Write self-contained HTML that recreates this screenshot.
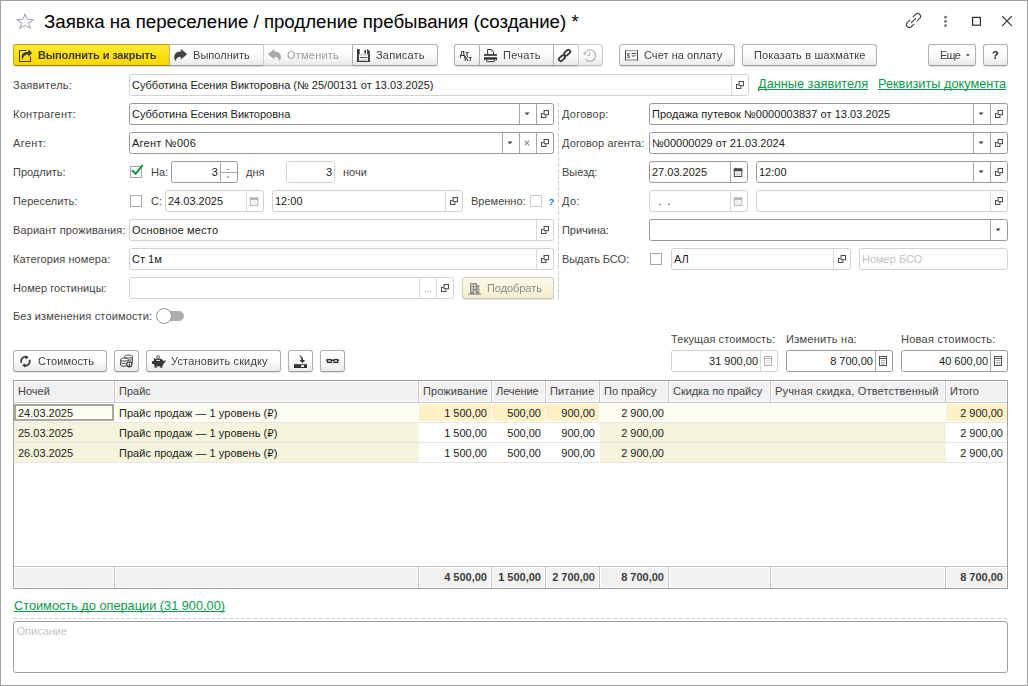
<!DOCTYPE html>
<html lang="ru"><head><meta charset="utf-8"><title>Заявка на переселение / продление пребывания (создание) *</title>
<style>
*{box-sizing:border-box;margin:0;padding:0}
html,body{width:1028px;height:686px;overflow:hidden;background:#fff}
body{font-family:"Liberation Sans",Arial,sans-serif;font-size:11px;color:#333;position:relative}
.a{position:absolute;white-space:nowrap}
.frame{left:0;top:0;width:1028px;height:686px;border:1px solid #a0a0a0}
.title{left:44px;top:11px;font-size:18.67px;line-height:22px;color:#000}
.btn{height:22px;top:44px;border:1px solid #b0b0b0;border-bottom-color:#9c9c9c;border-radius:3px;background:linear-gradient(#ffffff 35%,#ebebeb);line-height:20px;font-size:11px;color:#414141;box-shadow:0 1px 1px rgba(0,0,0,.13)}
.btn.dis{color:#9c9ca2;border-color:#cdcdcd;border-bottom-color:#c0c0c0;box-shadow:0 1px 1px rgba(0,0,0,.07)}
.btn.y{background:linear-gradient(#ffeb3c,#ffe10a 50%,#f7d700);border-color:#b8a000;border-left-color:#c8aa00;border-bottom-color:#a08800;font-weight:bold;color:#3a3a44}
.btn.cr{background:linear-gradient(#fdfbea,#f2eecb);border-color:#d3d1c4;border-bottom-color:#c9c7ba;color:#8c8c8c;box-shadow:0 1px 1px rgba(0,0,0,.12)}
.bl{border-top-left-radius:0;border-bottom-left-radius:0}
.br{border-top-right-radius:0;border-bottom-right-radius:0;border-right:none}
.t{position:absolute;top:0;line-height:20px;will-change:transform}
.lbl{line-height:14px;font-size:11px;color:#444}
.fld{height:22px;border:1px solid #999;border-radius:2.5px;background:#fff;line-height:20px;padding-left:2px;font-size:11px;color:#222;overflow:hidden}
.fld.ro{border-color:#d2d2d2}
.fld.r{text-align:right}
.sep{position:absolute;top:0;bottom:0;width:1px;background:#a8a8a8}
.ro .sep{background:#dadada}
.link{color:#0a9a4a;text-decoration:underline;text-decoration-skip-ink:none;font-size:12.75px;line-height:16px}
.cb{width:12px;height:12px;border:1px solid #a6a6a6;background:#fff}
svg{position:absolute;overflow:visible}
.th{height:20px;line-height:21px;padding-left:4px;color:#444;overflow:hidden}
.vs{width:2px;background:linear-gradient(90deg,#c9c9c9 50%,#fff 50%)}
.td{height:19px;line-height:21px;padding-left:4px;color:#222;overflow:hidden}
.td.num{text-align:right;padding-right:4px;padding-left:0}
</style></head><body>
<div class="a frame"></div>
<div class="a title">Заявка на переселение / продление пребывания (создание) *</div>
<div class="a btn y br" style="left:13px;width:156px"><span class="t" style="left:24px;letter-spacing:-0.138px">Выполнить и закрыть</span></div>
<div class="a btn bl br" style="left:169px;width:94px"><span class="t" style="left:23px;letter-spacing:0.041px">Выполнить</span></div>
<div class="a btn bl br dis" style="left:263px;width:89px"><span class="t" style="left:23px;letter-spacing:0.216px">Отменить</span></div>
<div class="a btn bl" style="left:352px;width:86px"><span class="t" style="left:23px;letter-spacing:0.223px">Записать</span></div>
<div class="a btn br" style="left:454px;width:25px"></div>
<div class="a btn bl br" style="left:479px;width:74px"><span class="t" style="left:23px;letter-spacing:0.28px">Печать</span></div>
<div class="a btn bl br" style="left:553px;width:25px"></div>
<div class="a btn bl dis" style="left:578px;width:25px"></div>
<div class="a btn " style="left:619px;width:116px"><span class="t" style="left:24px;letter-spacing:0.046px">Счет на оплату</span></div>
<div class="a btn " style="left:742px;width:135px"><span class="t" style="left:11px;letter-spacing:0.153px">Показать в шахматке</span></div>
<div class="a btn " style="left:928px;width:48px"><span class="t" style="left:11px;letter-spacing:-0.757px">Еще</span></div>
<div class="a btn " style="left:983px;width:25px;font-weight:bold;color:#222"><span class="t" style="left:8px">?</span></div>
<!-- ICONS: title bar -->
<svg class="a" style="left:15px;top:12px" width="20" height="20" viewBox="15 12 20 20"><polygon points="25.05,14.20 27.22,19.34 33.32,19.61 28.57,23.06 30.16,28.36 25.05,25.36 19.94,28.36 21.53,23.06 16.78,19.61 22.88,19.34" fill="none" stroke="#a3abb3" stroke-width="1.1" stroke-linejoin="miter"/></svg>
<svg class="a" style="left:904px;top:11px" width="20" height="20" viewBox="904 11 20 20"><g fill="none" stroke="#444" stroke-width="1.15" stroke-linecap="round"><path d="M913.1 16.8L915.65 14.25A2.9 2.9 0 0 1 919.75 18.35L917.2 20.9"/><path d="M909.8 20.1L907.25 22.65A2.9 2.9 0 0 0 911.35 26.75L913.9 24.2"/><path d="M911.4 22.6L915.7 18.3"/></g></svg>
<svg class="a" style="left:940px;top:12px" width="12" height="18" viewBox="940 12 12 18"><g fill="#707070"><circle cx="945.5" cy="17.2" r="1.35"/><circle cx="945.5" cy="21.4" r="1.35"/><circle cx="945.5" cy="25.6" r="1.35"/></g></svg>
<svg class="a" style="left:968px;top:12px" width="18" height="18" viewBox="968 12 18 18"><rect x="972.6" y="17.4" width="7.8" height="7.8" fill="none" stroke="#2a2a2a" stroke-width="1.2"/></svg>
<svg class="a" style="left:998px;top:12px" width="18" height="18" viewBox="998 12 18 18"><path d="M1002.2 16.2l9.6 9.6M1011.8 16.2l-9.6 9.6" fill="none" stroke="#2a2a2a" stroke-width="1.1"/></svg>

<!-- ICONS: main toolbar -->
<svg class="a" style="left:17px;top:46px" width="18" height="18" viewBox="17 46 18 18"><path d="M26.5 50.5H19.5V61.5H30.5V56.5" fill="none" stroke="#3e3e4a" stroke-width="1.05"/><path d="M28.4 49L32 53L28.4 56.9V54.5C25.4 54.5 23.6 55.6 22.4 59.8C20.8 55.5 21.8 51.8 28.4 51.8Z" fill="#3e3e4a"/></svg>
<svg class="a" style="left:172px;top:47px" width="18" height="16" viewBox="172 47 18 16"><path d="M180.8 48.8L187.2 54.2L180.8 59.6V56.8C178 56.8 176.4 58 175.6 61.2C173.2 58 173.4 51.6 180.8 51.6Z" fill="#444"/></svg>
<svg class="a" style="left:266px;top:47px" width="18" height="16" viewBox="266 47 18 16"><path d="M274.4 48.8L268 54.2L274.4 59.6V56.8C277.2 56.8 278.8 58 279.6 61.2C282 58 281.8 51.6 274.4 51.6Z" fill="#a8a8a8"/></svg>
<svg class="a" style="left:356px;top:48px" width="15" height="15" viewBox="356 48 15 15"><path d="M357 49H359.7V54.3H367.1V49H367.5L369.9 51.4V61.9H357Z" fill="#3a3a3a"/><rect x="364.4" y="50" width="1.6" height="3.6" fill="#3a3a3a"/><rect x="358.9" y="54.3" width="9.1" height="6.6" fill="#fff"/><rect x="358.9" y="54.3" width="9.1" height="1.4" fill="#cfcfcf"/><rect x="359.8" y="57.1" width="7.4" height=".9" fill="#3a3a3a"/><rect x="359.6" y="59.3" width="7.8" height="1.5" fill="#c4c4c4"/></svg>
<svg class="a" style="left:458px;top:48px;will-change:transform" width="16" height="15" viewBox="458 48 16 15"><g font-family="Liberation Sans,Arial,sans-serif" font-weight="bold" font-size="7.4px" fill="#333"><text x="459.8" y="55.5" textLength="9" lengthAdjust="spacingAndGlyphs">Дт</text><text x="464.2" y="61.2" textLength="8" lengthAdjust="spacingAndGlyphs">Кт</text></g></svg>
<svg class="a" style="left:483px;top:48px" width="16" height="15" viewBox="483 48 16 15"><path d="M487.6 54.5V49.5H491.4L493.5 51.6V54.5" fill="#fff" stroke="#3a3a3a" stroke-width="1"/><path d="M491.2 49.6V51.8H493.4" fill="none" stroke="#9a9a9a" stroke-width=".8"/><rect x="484" y="54.1" width="13" height="1.7" fill="#333"/><path d="M484 57.2H497V60.2H495.5V59H485.5V60.2H484Z" fill="#333"/><path d="M486.2 59.2H494.8L494 61.6H487Z" fill="#fff" stroke="#333" stroke-width="1"/></svg>
<svg class="a" style="left:556px;top:47px" width="18" height="17" viewBox="556 47 18 17"><g fill="none" stroke="#3a3a3a" stroke-width="1.8"><rect x="-1.85" y="-3.45" width="3.7" height="6.9" rx="1.85" transform="translate(567.2 52.7) rotate(48)"/><rect x="-1.85" y="-3.45" width="3.7" height="6.9" rx="1.85" transform="translate(561.9 58.2) rotate(48)"/></g></svg>
<svg class="a" style="left:581px;top:47px" width="18" height="17" viewBox="581 47 18 17"><g fill="none" stroke="#b4b4b4" stroke-width="1.15"><path d="M584.6 53.6A5.7 5.7 0 1 1 585.6 59.4"/><path d="M589.6 52V55.4H587.4"/></g><path d="M583 52.6L586.4 53L584.2 55.6Z" fill="#b4b4b4"/></svg>
<svg class="a" style="left:624px;top:49px;will-change:transform" width="15" height="13" viewBox="624 49 15 13"><rect x="625" y="50" width="13" height="10.6" fill="#fff"/><path d="M625 50.7H638M625 60H638" stroke="#a4a4a4" stroke-width="1.3" fill="none"/><path d="M625.5 50.4V60.4M637.5 50.4V60.4" stroke="#444" stroke-width="1" fill="none"/><text x="626.4" y="58.4" font-family="Liberation Sans,Arial,sans-serif" font-size="8px" fill="#333" textLength="3.7" lengthAdjust="spacingAndGlyphs">$</text><path d="M631.6 53.5H636" stroke="#444" stroke-width="1" fill="none"/><path d="M631.6 55.5H636M632 56.6H634.6" stroke="#8a8a8a" stroke-width=".9" fill="none"/></svg>
<svg class="a" style="left:964px;top:52px" width="8" height="6" viewBox="964 52 8 6"><path d="M965.9 54.3H969.9L967.9 56.4Z" fill="#444"/></svg>

<div class="a lbl" style="left:13px;top:78px;letter-spacing:0.255px">Заявитель:</div>
<div class="a fld ro" style="left:129px;top:74px;width:620px">Субботина Есения Викторовна (№ 25/00131 от 13.03.2025)<i class="sep" style="left:601px"></i></div>
<svg class="a" style="left:735px;top:80px" width="12" height="12" viewBox="735 80 12 12"><g fill="none" stroke="#4a4a4a" stroke-width="1.05"><path d="M738.4 84.4H736.5V88.4H740.9V86.3"/><rect x="739.1" y="81.5" width="4.4" height="4.2" fill="#fff"/></g></svg>
<div class="a link" style="left:758px;top:76px">Данные заявителя</div>
<div class="a link" style="left:878px;top:76px">Реквизиты документа</div>
<div class="a lbl" style="left:13px;top:107px;letter-spacing:0.273px">Контрагент:</div>
<div class="a fld " style="left:129px;top:103px;width:425px">Субботина Есения Викторовна<i class="sep" style="left:389px"></i><i class="sep" style="left:406px"></i></div>
<svg class="a" style="left:523px;top:111px" width="9" height="6" viewBox="523 111 9 6"><path d="M524.6 112.6H529.6L527.1 115.3Z" fill="#444"/></svg>
<svg class="a" style="left:540px;top:109px" width="12" height="12" viewBox="540 109 12 12"><g fill="none" stroke="#4a4a4a" stroke-width="1.05"><path d="M543.4 113.4H541.5V117.4H545.9V115.3"/><rect x="544.1" y="110.5" width="4.4" height="4.2" fill="#fff"/></g></svg>
<div class="a lbl" style="left:562px;top:107px;letter-spacing:0.25px">Договор:</div>
<div class="a fld " style="left:649px;top:103px;width:359px;letter-spacing:0.048px">Продажа путевок №0000003837 от 13.03.2025<i class="sep" style="left:323px"></i><i class="sep" style="left:340px"></i></div>
<svg class="a" style="left:977px;top:111px" width="9" height="6" viewBox="977 111 9 6"><path d="M978.6 112.6H983.6L981.1 115.3Z" fill="#444"/></svg>
<svg class="a" style="left:994px;top:109px" width="12" height="12" viewBox="994 109 12 12"><g fill="none" stroke="#4a4a4a" stroke-width="1.05"><path d="M997.4 113.4H995.5V117.4H999.9V115.3"/><rect x="998.1" y="110.5" width="4.4" height="4.2" fill="#fff"/></g></svg>
<div class="a lbl" style="left:13px;top:136px;letter-spacing:0.338px">Агент:</div>
<div class="a fld " style="left:129px;top:132px;width:425px;letter-spacing:0.246px">Агент №006<i class="sep" style="left:372px"></i><i class="sep" style="left:389px"></i><i class="sep" style="left:406px"></i></div>
<svg class="a" style="left:506px;top:140px" width="9" height="6" viewBox="506 140 9 6"><path d="M507.6 141.6H512.6L510.1 144.3Z" fill="#444"/></svg>
<svg class="a" style="left:523px;top:139px" width="9" height="9" viewBox="523 139 9 9"><path d="M524.7 140.7L529.3 145.3M529.3 140.7L524.7 145.3" stroke="#8a8a8a" stroke-width="1.1" fill="none"/></svg>
<svg class="a" style="left:540px;top:138px" width="12" height="12" viewBox="540 138 12 12"><g fill="none" stroke="#4a4a4a" stroke-width="1.05"><path d="M543.4 142.4H541.5V146.4H545.9V144.3"/><rect x="544.1" y="139.5" width="4.4" height="4.2" fill="#fff"/></g></svg>
<div class="a lbl" style="left:562px;top:136px;letter-spacing:0.108px">Договор агента:</div>
<div class="a fld " style="left:649px;top:132px;width:359px">№00000029 от 21.03.2024<i class="sep" style="left:323px"></i><i class="sep" style="left:340px"></i></div>
<svg class="a" style="left:977px;top:140px" width="9" height="6" viewBox="977 140 9 6"><path d="M978.6 141.6H983.6L981.1 144.3Z" fill="#444"/></svg>
<svg class="a" style="left:994px;top:138px" width="12" height="12" viewBox="994 138 12 12"><g fill="none" stroke="#4a4a4a" stroke-width="1.05"><path d="M997.4 142.4H995.5V146.4H999.9V144.3"/><rect x="998.1" y="139.5" width="4.4" height="4.2" fill="#fff"/></g></svg>
<div class="a lbl" style="left:13px;top:165px;letter-spacing:-0.019px">Продлить:</div>
<div class="a cb" style="left:130px;top:166px"></div>
<svg class="a" style="left:130px;top:163px" width="14" height="14" viewBox="130 163 14 14"><path d="M132.6 170.8L135.6 173.9L142.2 165.6" fill="none" stroke="#0a9642" stroke-width="2" stroke-linecap="round" stroke-linejoin="round"/></svg>
<div class="a lbl" style="left:151px;top:165px">На:</div>
<div class="a fld r" style="left:171px;top:161px;width:67px;padding-right:19.2px">3<i class="sep" style="left:48px"></i></div>
<svg class="a" style="left:221px;top:162px" width="16" height="20" viewBox="221 162 16 20"><path d="M221 172.5H237" stroke="#a8a8a8" stroke-width="1"/><path d="M226.7 170.1H229.3L228 168.7Z M226.7 176.6H229.3L228 178Z" fill="#666"/></svg>
<div class="a lbl" style="left:246px;top:165px">дня</div>
<div class="a fld ro r" style="left:286px;top:161px;width:49px;padding-right:2px">3</div>
<div class="a lbl" style="left:343px;top:165px">ночи</div>
<div class="a lbl" style="left:562px;top:165px;letter-spacing:0.006px">Выезд:</div>
<div class="a fld " style="left:649px;top:161px;width:99px;padding-left:2px">27.03.2025<i class="sep" style="left:80px"></i></div>
<svg class="a" style="left:733px;top:167px" width="11" height="11" viewBox="733 167 11 11"><rect x="734.3" y="169" width="7.5" height="7.5" fill="#fff" stroke="#4a4a4a" stroke-width="1"/><rect x="733.8" y="168.6" width="8.5" height="2.6" fill="#4a4a4a"/><rect x="735.4" y="167.8" width="1.3" height="1.2" fill="#4a4a4a"/><rect x="739.4" y="167.8" width="1.3" height="1.2" fill="#4a4a4a"/><path d="M735 173H741.2M735 174.8H741.2M737 171.4V176M739.1 171.4V176" stroke="#c8c8c8" stroke-width=".7" fill="none"/></svg>
<div class="a fld " style="left:756px;top:161px;width:252px">12:00<i class="sep" style="left:216px"></i><i class="sep" style="left:233px"></i></div>
<svg class="a" style="left:977px;top:169px" width="9" height="6" viewBox="977 169 9 6"><path d="M978.6 170.6H983.6L981.1 173.3Z" fill="#444"/></svg>
<svg class="a" style="left:994px;top:167px" width="12" height="12" viewBox="994 167 12 12"><g fill="none" stroke="#4a4a4a" stroke-width="1.05"><path d="M997.4 171.4H995.5V175.4H999.9V173.3"/><rect x="998.1" y="168.5" width="4.4" height="4.2" fill="#fff"/></g></svg>
<div class="a lbl" style="left:13px;top:194px;letter-spacing:0.053px">Переселить:</div>
<div class="a cb" style="left:130px;top:195px"></div>
<div class="a lbl" style="left:151px;top:194px">С:</div>
<div class="a fld ro" style="left:165px;top:190px;width:99px;padding-left:2px">24.03.2025<i class="sep" style="left:80px"></i></div>
<svg class="a" style="left:249px;top:196px" width="11" height="11" viewBox="249 196 11 11"><rect x="250.3" y="198" width="7.5" height="7.5" fill="#fff" stroke="#b8b8b8" stroke-width="1"/><rect x="249.8" y="197.6" width="8.5" height="2.6" fill="#b8b8b8"/><rect x="251.4" y="196.8" width="1.3" height="1.2" fill="#b8b8b8"/><rect x="255.4" y="196.8" width="1.3" height="1.2" fill="#b8b8b8"/><path d="M251 202H257.2M251 203.8H257.2M253 200.4V205M255.1 200.4V205" stroke="#e4e4e4" stroke-width=".7" fill="none"/></svg>
<div class="a fld ro" style="left:272px;top:190px;width:191px">12:00<i class="sep" style="left:172px"></i></div>
<svg class="a" style="left:449px;top:196px" width="12" height="12" viewBox="449 196 12 12"><g fill="none" stroke="#4a4a4a" stroke-width="1.05"><path d="M452.4 200.4H450.5V204.4H454.9V202.3"/><rect x="453.1" y="197.5" width="4.4" height="4.2" fill="#fff"/></g></svg>
<div class="a lbl" style="left:471px;top:194px">Временно:</div>
<div class="a cb" style="left:530px;top:195px;border-color:#d0d0d0"></div>
<div class="a lbl" style="left:548.5px;top:194.5px;color:#1a73c8;font-weight:bold;font-size:9.5px">?</div>
<div class="a lbl" style="left:562px;top:194px;letter-spacing:0.431px">До:</div>
<div class="a fld ro" style="left:649px;top:190px;width:99px;padding-left:8.2px">.&nbsp;&nbsp;.<i class="sep" style="left:80px"></i></div>
<svg class="a" style="left:733px;top:196px" width="11" height="11" viewBox="733 196 11 11"><rect x="734.3" y="198" width="7.5" height="7.5" fill="#fff" stroke="#b8b8b8" stroke-width="1"/><rect x="733.8" y="197.6" width="8.5" height="2.6" fill="#b8b8b8"/><rect x="735.4" y="196.8" width="1.3" height="1.2" fill="#b8b8b8"/><rect x="739.4" y="196.8" width="1.3" height="1.2" fill="#b8b8b8"/><path d="M735 202H741.2M735 203.8H741.2M737 200.4V205M739.1 200.4V205" stroke="#e4e4e4" stroke-width=".7" fill="none"/></svg>
<div class="a fld ro" style="left:756px;top:190px;width:252px"><i class="sep" style="left:233px"></i></div>
<svg class="a" style="left:994px;top:196px" width="12" height="12" viewBox="994 196 12 12"><g fill="none" stroke="#4a4a4a" stroke-width="1.05"><path d="M997.4 200.4H995.5V204.4H999.9V202.3"/><rect x="998.1" y="197.5" width="4.4" height="4.2" fill="#fff"/></g></svg>
<div class="a lbl" style="left:13px;top:223px;letter-spacing:0.101px">Вариант проживания:</div>
<div class="a fld ro" style="left:129px;top:219px;width:425px;letter-spacing:0.184px">Основное место<i class="sep" style="left:406px"></i></div>
<svg class="a" style="left:540px;top:225px" width="12" height="12" viewBox="540 225 12 12"><g fill="none" stroke="#4a4a4a" stroke-width="1.05"><path d="M543.4 229.4H541.5V233.4H545.9V231.3"/><rect x="544.1" y="226.5" width="4.4" height="4.2" fill="#fff"/></g></svg>
<div class="a lbl" style="left:562px;top:223px;letter-spacing:-0.057px">Причина:</div>
<div class="a fld " style="left:649px;top:219px;width:359px"><i class="sep" style="left:340px"></i></div>
<svg class="a" style="left:994px;top:227px" width="9" height="6" viewBox="994 227 9 6"><path d="M995.6 228.6H1000.6L998.1 231.3Z" fill="#444"/></svg>
<div class="a lbl" style="left:13px;top:252px;letter-spacing:0.097px">Категория номера:</div>
<div class="a fld ro" style="left:129px;top:248px;width:425px">Ст 1м<i class="sep" style="left:406px"></i></div>
<svg class="a" style="left:540px;top:254px" width="12" height="12" viewBox="540 254 12 12"><g fill="none" stroke="#4a4a4a" stroke-width="1.05"><path d="M543.4 258.4H541.5V262.4H545.9V260.3"/><rect x="544.1" y="255.5" width="4.4" height="4.2" fill="#fff"/></g></svg>
<div class="a lbl" style="left:562px;top:252px;letter-spacing:-0.077px">Выдать БСО:</div>
<div class="a cb" style="left:650px;top:253px"></div>
<div class="a fld ro" style="left:671px;top:248px;width:180px">АЛ<i class="sep" style="left:161px"></i></div>
<svg class="a" style="left:837px;top:254px" width="12" height="12" viewBox="837 254 12 12"><g fill="none" stroke="#4a4a4a" stroke-width="1.05"><path d="M840.4 258.4H838.5V262.4H842.9V260.3"/><rect x="841.1" y="255.5" width="4.4" height="4.2" fill="#fff"/></g></svg>
<div class="a fld ro" style="left:859px;top:248px;width:149px;color:#c4c4c4">Номер БСО</div>
<div class="a lbl" style="left:13px;top:281px;letter-spacing:0.046px">Номер гостиницы:</div>
<div class="a fld ro" style="left:129px;top:277px;width:325px"><i class="sep" style="left:289px"></i><i class="sep" style="left:306px"></i></div>
<svg class="a" style="left:440px;top:283px" width="12" height="12" viewBox="440 283 12 12"><g fill="none" stroke="#4a4a4a" stroke-width="1.05"><path d="M443.4 287.4H441.5V291.4H445.9V289.3"/><rect x="444.1" y="284.5" width="4.4" height="4.2" fill="#fff"/></g></svg>
<div class="a" style="left:423.6px;top:282px;line-height:14px;color:#a8a8a8;font-size:10px;letter-spacing:-.3px;will-change:transform">...</div>
<div class="a btn cr" style="left:462px;width:92px;top:277px"><span class="t" style="left:24px;letter-spacing:-0.065px">Подобрать</span></div>
<svg class="a" style="left:468px;top:282px" width="14" height="14" viewBox="468 282 14 14"><g fill="#8e8e8e"><path d="M470 283H477V294H470Z"/><path d="M477 285.2H479.4V294H477Z"/><rect x="468.2" y="293.6" width="13" height="1.1"/></g><g fill="#fbf8e2"><rect x="471.3" y="284.3" width="1.5" height="1.7"/><rect x="474" y="284.3" width="1.5" height="1.7"/><rect x="471.3" y="287.1" width="1.5" height="1.7"/><rect x="474" y="287.1" width="1.5" height="1.7"/><rect x="471.3" y="289.9" width="1.5" height="1.5"/><rect x="477.6" y="287.1" width="1" height="1.7"/><rect x="477.6" y="289.9" width="1" height="1.5"/><rect x="474.2" y="290.4" width="1.3" height="3.2"/></g></svg>
<div class="a" style="left:558px;top:103px;width:1px;height:196px;background:repeating-linear-gradient(#cdcdcd 0 4px,#fff 4px 6px)"></div>
<div class="a lbl" style="left:13px;top:309px;letter-spacing:0.155px">Без изменения стоимости:</div>
<div class="a" style="left:164px;top:311px;width:20px;height:10px;border-radius:0 5px 5px 0;background:#adadad"></div>
<div class="a" style="left:156px;top:308px;width:16px;height:16px;border-radius:8px;background:#fff;border:1px solid #8f9696"></div>
<div class="a lbl" style="left:671px;top:332px;letter-spacing:0.095px">Текущая стоимость:</div>
<div class="a lbl" style="left:786px;top:332px;letter-spacing:0.271px">Изменить на:</div>
<div class="a lbl" style="left:901px;top:332px;letter-spacing:0.251px">Новая стоимость:</div>
<div class="a fld ro r" style="left:671px;top:350px;width:107px;padding-right:19px">31 900,00<i class="sep" style="left:88px"></i></div>
<svg class="a" style="left:764px;top:356px" width="9" height="11" viewBox="764 356 9 11"><rect x="764.5" y="356.5" width="7" height="9" fill="#fff" stroke="#b4b4b4" stroke-width="1"/><path d="M765 358.5H771" stroke="#b4b4b4" stroke-width="1"/><path d="M766 360.5H770M766 362.5H770M766 364H770" stroke="#dcdcdc" stroke-width="1"/></svg>
<div class="a fld r" style="left:786px;top:350px;width:107px;padding-right:19px">8 700,00<i class="sep" style="left:88px"></i></div>
<svg class="a" style="left:879px;top:356px" width="9" height="11" viewBox="879 356 9 11"><rect x="879.5" y="356.5" width="7" height="9" fill="#fff" stroke="#555" stroke-width="1"/><path d="M880 358.5H886" stroke="#555" stroke-width="1"/><path d="M881 360.5H885M881 362.5H885M881 364H885" stroke="#b0b0b0" stroke-width="1"/></svg>
<div class="a fld r" style="left:901px;top:350px;width:107px;padding-right:19px">40 600,00<i class="sep" style="left:88px"></i></div>
<svg class="a" style="left:994px;top:356px" width="9" height="11" viewBox="994 356 9 11"><rect x="994.5" y="356.5" width="7" height="9" fill="#fff" stroke="#555" stroke-width="1"/><path d="M995 358.5H1001" stroke="#555" stroke-width="1"/><path d="M996 360.5H1000M996 362.5H1000M996 364H1000" stroke="#b0b0b0" stroke-width="1"/></svg>
<div class="a btn " style="left:13px;width:94px;top:350px"><span class="t" style="left:24px;letter-spacing:0.1px">Стоимость</span></div>
<div class="a btn " style="left:114px;width:25px;top:350px"></div>
<div class="a btn " style="left:146px;width:135px;top:350px"><span class="t" style="left:24.400000000000006px;letter-spacing:0.155px">Установить скидку</span></div>
<div class="a btn " style="left:288px;width:25px;top:350px"></div>
<div class="a btn " style="left:320px;width:25px;top:350px"></div>
<!-- ICONS: table toolbar -->
<svg class="a" style="left:19px;top:354px" width="14" height="15" viewBox="19 354 14 15"><g fill="none" stroke="#3a3a3a" stroke-width="1.8"><path d="M21.3 362.8A4.4 4.4 0 0 1 26.4 357"/><path d="M29.6 359.8A4.4 4.4 0 0 1 24.5 365.6"/></g><path d="M25.6 355L28.7 357.5L25.6 359.6Z M25.3 363.2L22.2 365.2L25.3 367.6Z" fill="#3a3a3a"/></svg>
<svg class="a" style="left:119px;top:354px" width="16" height="15" viewBox="119 354 16 15"><g stroke="#4a4a4a" stroke-width=".95"><path d="M124.5 356.5V363.4C124.5 365.2 132.5 365.2 132.5 363.4V356.5" fill="#e2e2e2"/><ellipse cx="128.5" cy="356.5" rx="4" ry="1.5" fill="#fff"/><path d="M124.5 358.9C124.5 360.6 132.5 360.6 132.5 358.9M124.5 361.2C124.5 362.9 132.5 362.9 132.5 361.2" fill="none" stroke="#6a6a6a"/><path d="M120.5 359.6V365C120.5 366.8 128.1 366.8 128.1 365V359.6" fill="#e2e2e2"/><ellipse cx="124.3" cy="359.6" rx="3.8" ry="1.5" fill="#fff"/><path d="M120.5 362.2C120.5 363.9 128.1 363.9 128.1 362.2" fill="none" stroke="#6a6a6a"/></g><circle cx="129.3" cy="364.3" r="3.4" fill="#fff"/><circle cx="129.3" cy="364.3" r="2.6" fill="#fff" stroke="#2a2a2a" stroke-width="1.1"/><rect x="128.8" y="363.6" width="1.1" height="2.4" fill="#222"/><rect x="128.8" y="362.4" width="1.1" height=".8" fill="#222"/></svg>
<svg class="a" style="left:151px;top:354px" width="15" height="15" viewBox="151 354 15 15"><circle cx="158.1" cy="357" r="1.5" fill="#e0e0e0" stroke="#6a6a6a" stroke-width=".9"/><g fill="#363636"><ellipse cx="158.6" cy="362.5" rx="5.5" ry="3.9"/><rect x="151.9" y="360.9" width="3" height="3.2" rx="1"/><path d="M153.9 357.8L157 359.8L154.3 361.4Z"/><rect x="154.5" y="365" width="2.3" height="2.7"/><rect x="160.2" y="365" width="2.3" height="2.7"/><path d="M163.6 362.4C164.8 362.2 165.3 361.4 165.2 360.2" fill="none" stroke="#363636" stroke-width="1.1"/></g><rect x="156.2" y="359.9" width="3.8" height=".9" fill="#fff"/></svg>
<svg class="a" style="left:293px;top:354px" width="15" height="15" viewBox="293 354 15 15"><rect x="294" y="364.2" width="13" height="3.8" fill="#333"/><rect x="301" y="365.2" width="3" height="1.8" fill="#fff"/><path d="M298.2 355.2C301.6 355.4 303 357.4 303.2 360H305.2L302.4 363.2L299.6 360H301.4C301.2 357.8 300.4 356.2 298.2 355.2Z" fill="#333"/></svg>
<svg class="a" style="left:325px;top:357px" width="15" height="8" viewBox="325 357 15 8"><g fill="none" stroke="#2e2e2e" stroke-width="1.3"><rect x="327.6" y="359.6" width="3.6" height="2.8"/><rect x="334" y="359.6" width="3.6" height="2.8"/><path d="M331.2 360.4H334M326 360.2H327.6M337.6 360.2H339.2"/></g></svg>

<div class="a" id="tbl" style="left:13px;top:380px;width:995px;height:209px;border:1px solid #a0a0a0;background:#fff">
<div class="a" style="left:0px;top:21px;width:993px;height:1px;background:#c4c4c4"></div>
<div class="a" style="left:0px;top:185px;width:993px;height:1px;background:#c4c4c4"></div>
<div class="a" style="left:1px;top:1px;width:98px;height:19px;background:#f1f1f1"></div>
<div class="a" style="left:1px;top:187px;width:98px;height:19px;background:#f1f1f1"></div>
<div class="a" style="left:100px;top:0px;width:1px;height:21px;background:#c4c4c4"></div>
<div class="a" style="left:100px;top:186px;width:1px;height:21px;background:#c4c4c4"></div>
<div class="a th" style="left:0px;top:0;width:100px">Ночей</div>
<div class="a" style="left:102px;top:1px;width:301px;height:19px;background:#f1f1f1"></div>
<div class="a" style="left:102px;top:187px;width:301px;height:19px;background:#f1f1f1"></div>
<div class="a" style="left:404px;top:0px;width:1px;height:21px;background:#c4c4c4"></div>
<div class="a" style="left:404px;top:186px;width:1px;height:21px;background:#c4c4c4"></div>
<div class="a th" style="left:101px;top:0;width:303px">Прайс</div>
<div class="a" style="left:406px;top:1px;width:70px;height:19px;background:#f1f1f1"></div>
<div class="a" style="left:406px;top:187px;width:70px;height:19px;background:#f1f1f1"></div>
<div class="a" style="left:477px;top:0px;width:1px;height:21px;background:#c4c4c4"></div>
<div class="a" style="left:477px;top:186px;width:1px;height:21px;background:#c4c4c4"></div>
<div class="a th" style="left:405px;top:0;width:72px;letter-spacing:0.104px">Проживание</div>
<div class="a" style="left:479px;top:1px;width:51px;height:19px;background:#f1f1f1"></div>
<div class="a" style="left:479px;top:187px;width:51px;height:19px;background:#f1f1f1"></div>
<div class="a" style="left:531px;top:0px;width:1px;height:21px;background:#c4c4c4"></div>
<div class="a" style="left:531px;top:186px;width:1px;height:21px;background:#c4c4c4"></div>
<div class="a th" style="left:478px;top:0;width:53px;letter-spacing:-0.073px">Лечение</div>
<div class="a" style="left:533px;top:1px;width:51px;height:19px;background:#f1f1f1"></div>
<div class="a" style="left:533px;top:187px;width:51px;height:19px;background:#f1f1f1"></div>
<div class="a" style="left:585px;top:0px;width:1px;height:21px;background:#c4c4c4"></div>
<div class="a" style="left:585px;top:186px;width:1px;height:21px;background:#c4c4c4"></div>
<div class="a th" style="left:532px;top:0;width:53px;letter-spacing:0.139px">Питание</div>
<div class="a" style="left:587px;top:1px;width:66px;height:19px;background:#f1f1f1"></div>
<div class="a" style="left:587px;top:187px;width:66px;height:19px;background:#f1f1f1"></div>
<div class="a" style="left:654px;top:0px;width:1px;height:21px;background:#c4c4c4"></div>
<div class="a" style="left:654px;top:186px;width:1px;height:21px;background:#c4c4c4"></div>
<div class="a th" style="left:586px;top:0;width:68px">По прайсу</div>
<div class="a" style="left:656px;top:1px;width:99px;height:19px;background:#f1f1f1"></div>
<div class="a" style="left:656px;top:187px;width:99px;height:19px;background:#f1f1f1"></div>
<div class="a" style="left:756px;top:0px;width:1px;height:21px;background:#c4c4c4"></div>
<div class="a" style="left:756px;top:186px;width:1px;height:21px;background:#c4c4c4"></div>
<div class="a th" style="left:655px;top:0;width:101px;letter-spacing:-0.059px">Скидка по прайсу</div>
<div class="a" style="left:758px;top:1px;width:172px;height:19px;background:#f1f1f1"></div>
<div class="a" style="left:758px;top:187px;width:172px;height:19px;background:#f1f1f1"></div>
<div class="a" style="left:931px;top:0px;width:1px;height:21px;background:#c4c4c4"></div>
<div class="a" style="left:931px;top:186px;width:1px;height:21px;background:#c4c4c4"></div>
<div class="a th" style="left:757px;top:0;width:174px;letter-spacing:0.184px">Ручная скидка, Ответственный</div>
<div class="a" style="left:933px;top:1px;width:59px;height:19px;background:#f1f1f1"></div>
<div class="a" style="left:933px;top:187px;width:59px;height:19px;background:#f1f1f1"></div>
<div class="a th" style="left:932px;top:0;width:61px">Итого</div>
<div class="a" style="left:0px;top:23px;width:100px;height:17px;background:#fdfdf3"></div>
<div class="a" style="left:101px;top:23px;width:303px;height:17px;background:#fdfdf3"></div>
<div class="a" style="left:405px;top:23px;width:72px;height:17px;background:#fff1c6"></div>
<div class="a" style="left:478px;top:23px;width:53px;height:17px;background:#fff1c6"></div>
<div class="a" style="left:532px;top:23px;width:53px;height:17px;background:#fff1c6"></div>
<div class="a" style="left:586px;top:23px;width:68px;height:17px;background:#fdfdf3"></div>
<div class="a" style="left:655px;top:23px;width:101px;height:17px;background:#fdfdf3"></div>
<div class="a" style="left:757px;top:23px;width:174px;height:17px;background:#fdfdf3"></div>
<div class="a" style="left:932px;top:23px;width:61px;height:17px;background:#fff1c6"></div>
<div class="a" style="left:0px;top:41px;width:993px;height:1px;background:#e6e6e6"></div>
<div class="a td" style="left:0px;top:22px;width:100px">24.03.2025</div>
<div class="a td" style="left:101px;top:22px;width:303px;letter-spacing:0.05px">Прайс продаж — 1 уровень (<span style="font-family:'DejaVu Sans',sans-serif;font-size:10px;letter-spacing:0">₽</span>)</div>
<div class="a td num" style="left:405px;top:22px;width:72px">1 500,00</div>
<div class="a td num" style="left:478px;top:22px;width:53px">500,00</div>
<div class="a td num" style="left:532px;top:22px;width:53px">900,00</div>
<div class="a td num" style="left:586px;top:22px;width:68px">2 900,00</div>
<div class="a td num" style="left:932px;top:22px;width:61px">2 900,00</div>
<div class="a" style="left:0px;top:42px;width:101px;height:19px;background:#f4f5dc"></div>
<div class="a" style="left:101px;top:42px;width:304px;height:19px;background:#f4f5dc"></div>
<div class="a" style="left:586px;top:42px;width:69px;height:19px;background:#f4f5dc"></div>
<div class="a" style="left:655px;top:42px;width:102px;height:19px;background:#f4f5dc"></div>
<div class="a" style="left:757px;top:42px;width:175px;height:19px;background:#f4f5dc"></div>
<div class="a" style="left:0px;top:61px;width:993px;height:1px;background:#e6e6e6"></div>
<div class="a td" style="left:0px;top:42px;width:100px">25.03.2025</div>
<div class="a td" style="left:101px;top:42px;width:303px;letter-spacing:0.05px">Прайс продаж — 1 уровень (<span style="font-family:'DejaVu Sans',sans-serif;font-size:10px;letter-spacing:0">₽</span>)</div>
<div class="a td num" style="left:405px;top:42px;width:72px">1 500,00</div>
<div class="a td num" style="left:478px;top:42px;width:53px">500,00</div>
<div class="a td num" style="left:532px;top:42px;width:53px">900,00</div>
<div class="a td num" style="left:586px;top:42px;width:68px">2 900,00</div>
<div class="a td num" style="left:932px;top:42px;width:61px">2 900,00</div>
<div class="a" style="left:0px;top:62px;width:101px;height:19px;background:#f4f5dc"></div>
<div class="a" style="left:101px;top:62px;width:304px;height:19px;background:#f4f5dc"></div>
<div class="a" style="left:586px;top:62px;width:69px;height:19px;background:#f4f5dc"></div>
<div class="a" style="left:655px;top:62px;width:102px;height:19px;background:#f4f5dc"></div>
<div class="a" style="left:757px;top:62px;width:175px;height:19px;background:#f4f5dc"></div>
<div class="a" style="left:0px;top:81px;width:993px;height:1px;background:#e6e6e6"></div>
<div class="a td" style="left:0px;top:62px;width:100px">26.03.2025</div>
<div class="a td" style="left:101px;top:62px;width:303px;letter-spacing:0.05px">Прайс продаж — 1 уровень (<span style="font-family:'DejaVu Sans',sans-serif;font-size:10px;letter-spacing:0">₽</span>)</div>
<div class="a td num" style="left:405px;top:62px;width:72px">1 500,00</div>
<div class="a td num" style="left:478px;top:62px;width:53px">500,00</div>
<div class="a td num" style="left:532px;top:62px;width:53px">900,00</div>
<div class="a td num" style="left:586px;top:62px;width:68px">2 900,00</div>
<div class="a td num" style="left:932px;top:62px;width:61px">2 900,00</div>
<div class="a" style="left:0px;top:23px;width:100px;height:17px;border:2px solid #a9a99a"></div>
<div class="a td num" style="left:405px;top:186px;width:72px;height:21px;line-height:21px;font-weight:bold;color:#3c3c3c">4 500,00</div>
<div class="a td num" style="left:478px;top:186px;width:53px;height:21px;line-height:21px;font-weight:bold;color:#3c3c3c">1 500,00</div>
<div class="a td num" style="left:532px;top:186px;width:53px;height:21px;line-height:21px;font-weight:bold;color:#3c3c3c">2 700,00</div>
<div class="a td num" style="left:586px;top:186px;width:68px;height:21px;line-height:21px;font-weight:bold;color:#3c3c3c">8 700,00</div>
<div class="a td num" style="left:932px;top:186px;width:61px;height:21px;line-height:21px;font-weight:bold;color:#3c3c3c">8 700,00</div>
</div>
<div class="a link" style="left:14px;top:598px">Стоимость до операции (31 900,00)</div>
<div class="a" style="left:13px;top:618px;width:995px;height:1px;background:repeating-linear-gradient(90deg,#d2d2d2 0 4px,#fff 4px 6px)"></div>
<div class="a" style="left:13px;top:621px;width:995px;height:52px;border:1px solid #a0a0a0;border-radius:3px;color:#c4c4c4;padding:2px 0 0 2.5px;line-height:14px">Описание</div>
</body></html>
